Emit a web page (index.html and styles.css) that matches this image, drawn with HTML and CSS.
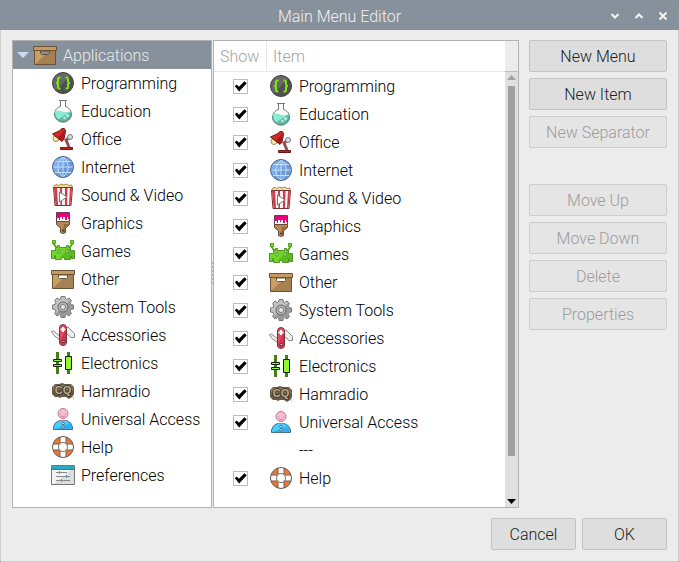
FILE: index.html
```html
<!DOCTYPE html>
<html lang="en">
<head>
<meta charset="utf-8">
<title>Main Menu Editor</title>
<link rel="stylesheet" href="styles.css">
</head>
<body>
<svg class="sprite" aria-hidden="true">
  <symbol id="box" viewBox="0 0 24 24">
    <path d="M1.500 7.500h21v14h-21z" fill="#ca9e67" stroke="#6b5235"/>
    <path d="M2 21 16 8h6v13z" fill="#a88152"/>
    <path d="M.5 3.500h23v4H.5z" fill="#c59a62" stroke="#6b5235"/>
    <path d="M7.500 8h9v2.500l-1 1h-7l-1-1z" fill="#fff" stroke="#6b5235"/>
  </symbol>
  <symbol id="box-selected" viewBox="0 0 24 24">
    <path d="M1.500 7.500h21v14h-21z" fill="#ca9e67" stroke="#6b5235"/>
    <path d="M2 21 16 8h6v13z" fill="#a88152"/>
    <path d="M.5 3.500h23v4H.5z" fill="#c59a62" stroke="#6b5235"/>
    <path d="M7.500 8h9v2.500l-1 1h-7l-1-1z" fill="#87919b" stroke="#6b5235"/>
  </symbol>
  <symbol id="programming" viewBox="0 0 24 24">
    <circle cx="12" cy="12" r="10.500" fill="#686868" stroke="#3c3c3c"/>
    <path d="M19.200 4.800A10 10 0 0 1 4.800 19.200z" fill="#505050"/>
    <path d="M9.500 6.500H8.300Q7 6.500 7 8v2.500Q7 12 5 12q2 0 2 1.500V16q0 1.500 1.300 1.500h1.200M14.500 6.500h1.200Q17 6.500 17 8v2.500q0 1.500 2 1.500-2 0-2 1.500V16q0 1.500-1.300 1.500h-1.200" fill="none" stroke="#7fe512" stroke-width="2"/>
  </symbol>
  <symbol id="education" viewBox="0 0 24 24">
    <path d="M9.500 2v5.500a8.500 8 0 1 0 5 0V2" fill="#fafafa" stroke="#777"/>
    <path d="M8 1.500h8" stroke="#777"/>
    <path d="M3.500 12q4-1 8 .5t9-.5v3.500A8.500 7 0 0 1 12 22.500 8.500 7 0 0 1 3.500 15.500z" fill="#8ce9d2"/>
    <path d="M20 12q2 7-4 9.500-5 1.500-9-1z" fill="#64bda9"/>
    <path d="M3.500 14a8.500 8.500 0 1 0 17 0" fill="none" stroke="#4d8c80"/>
    <circle cx="16.500" cy="16.500" r="1.500" fill="#b9eee2"/><circle cx="13.500" cy="19" r="1.200" fill="#b9eee2"/>
  </symbol>
  <symbol id="office" viewBox="0 0 24 24">
    <circle cx="5" cy="11.500" r="3" fill="#f8eda0" stroke="#999165"/>
    <path d="M18.500 10.500 15 13l3 7" fill="none" stroke="#666" stroke-width="3"/>
    <path d="M18.500 10.500 15 13l3 7" fill="none" stroke="#c33"/>
    <path d="M1.500 7 9 3.500Q10 1 13 1.500q2 1 1.500 3L13 12l-2 2.500z" fill="#d82929" stroke="#6b1a1a"/>
    <path d="m6.500 11 7.500-8-1.500 9-1.500 2z" fill="#a91c1c"/>
    <circle cx="19" cy="10" r="2.500" fill="#ddd" stroke="#777"/>
    <path d="M9.500 20.500h12v2h-12z" fill="#c92020" stroke="#6b1a1a"/>
  </symbol>
  <symbol id="internet" viewBox="0 0 24 24">
    <circle cx="12" cy="12" r="10.500" fill="#7badec"/>
    <path d="M19.400 4.600A10.500 10.500 0 0 1 4.600 19.400z" fill="#6b99d8"/>
    <path d="M12 1.500v21M1.500 12h21M3.500 6.500h17M3.500 17.500h17M12 1.500Q1 12 12 22.500M12 1.500Q23 12 12 22.500" fill="none" stroke="#c7dcf5"/>
    <circle cx="12" cy="12" r="10.500" fill="none" stroke="#4b6489"/>
  </symbol>
  <symbol id="video" viewBox="0 0 24 24">
    <path d="M3 5V3l2-1.500 3 1 2-1.500 3 1 3-1 2 1.500 3-.5v3z" fill="#f7df9b" stroke="#a68c54"/>
    <path d="M2.500 4.500h19l-1.500 18H4z" fill="#f2f2f2" stroke="#7a3338"/>
    <path d="M3 5h3l1 17H4.500zM9 5h2v17H9.500zM14 5h2.500l-.5 17h-2zM19 5h2l-1.500 17H18z" fill="#d23c4a"/>
    <path d="m8.500 9 7.500 5-7.500 5z" fill="#fff" stroke="#777"/>
  </symbol>
  <symbol id="graphics" viewBox="0 0 24 24">
    <path d="M5.500 1.500h13v9h-13z" fill="#fff" stroke="#733754"/>
    <path d="M6 2h12v6h-1V6h-1v3h-2V6h-2v2h-1V6H9v3H8V7H6z" fill="#e6007e"/>
    <path d="M5.500 10.500h13v3l-4 3.500v4.500l-2 1h-1l-2-1V17l-4-3.500z" fill="#b58a57" stroke="#654b31"/>
    <path d="M13 13h5l-4 3.500V21l-2 1z" fill="#91693f"/><circle cx="12" cy="19.500" r="1" fill="#4d3925"/>
  </symbol>
  <symbol id="games" viewBox="0 0 24 24">
    <path d="M2 4 5 8v2M22 4l-3 4v2" fill="none" stroke="#55a91a" stroke-width="2"/>
    <path d="M1.500 1.500h3v3h-3zM19.500 1.500h3v3h-3z" fill="#71dc1b" stroke="#55a020"/>
    <path d="M6.500 6.500h2v2h7v-2h2v2h2v3h4v8h-3v-3h-1v4h-6v-2h-3v2h-6v-4h-1v3h-3v-8h4v-3h2z" fill="#6fd824" stroke="#55922b"/>
    <path d="M8 19 19 9v3h4v7h-2v-3h-2v4h-5v-2h-4z" fill="#5dbc1d"/>
    <path d="M7 11h2v3H7zM15 11h2v3h-2z" fill="#fff" stroke="#5c8c39"/>
  </symbol>
  <symbol id="gear" viewBox="0 0 24 24">
    <path d="m9.500 4 .5-2.500h4l.5 2.500 1 .5L18 3l2.500 2.500L19 8l.8 1.500 2.700.5v4l-2.700.5L19 16l1.500 2.500L18 21l-2.500-1.500-1 .5-.5 2.500h-4L9.500 20l-1-.5L6 21l-2.500-2.500L5 16l-.8-1.500-2.700-.5v-4l2.700-.5L5 8 3.500 5.500 6 3l2.500 1.500z" fill="#c2c2c2" stroke="#777"/>
    <path d="m19.500 4.500 1 1L19 8l.8 1.500 2.200.5v4l-2.200.5L19 16l1.500 2.500L18 20.500 15.500 19l-1.500 3h-4l-.5-2.500-1-.5L6 20.500 4.500 19z" fill="#999"/>
    <circle cx="12" cy="12" r="5" fill="#b7b7b7" stroke="#666"/><circle cx="12" cy="12" r="2.500" fill="#eee" stroke="#777"/>
  </symbol>
  <symbol id="knife" viewBox="0 0 24 24">
    <path d="m9 17-6-4.500-2.500-4 2-.5L10 14zM15 10l5 4.500h3.500v-4L17 4l-2 1z" fill="#eee" stroke="#888"/>
    <rect x="8.500" y="1.500" width="7" height="21" rx="3.500" fill="#e94b61" stroke="#76323b"/>
    <path d="M15 5v14a3 3 0 0 1-6 0z" fill="#cc374d"/>
    <path d="M12 4v5M9.500 6.500h5" stroke="#fff" stroke-width="2"/>
    <path d="M11 17.500h3v2h-3z" fill="#bbb" stroke="#773640"/>
  </symbol>
  <symbol id="electronics" viewBox="0 0 24 24">
    <path d="M6.500 1v22M17.500 1v22" stroke="#477d12" stroke-width="3"/>
    <path d="M2.500 8.500h8v2h-8zM2.500 13.500h8v2h-8zM14.500 5.500h6v13h-6z" fill="#91fa2c" stroke="#10230a"/>
  </symbol>
  <symbol id="radio" viewBox="0 0 24 24">
    <path d="M4 17h16l3 4v-8z" fill="#ddd"/>
    <path d="M4 5h4l3-1 3 1h6l3 3v7l-2 3-3 2-3-2h-4l-2 1-2-1H4l-3-3V8z" fill="#675b48"/>
    <path d="M4 6h16l2 3v2H2V8z" fill="#8e8168"/>
    <text class="radio-call" x="12" y="15" text-anchor="middle" fill="#b8ab92" stroke="#443b2c" stroke-width="2" paint-order="stroke">CQ</text>
  </symbol>
  <symbol id="person" viewBox="0 0 24 24">
    <circle cx="12" cy="6.500" r="5" fill="#ffb9d2" stroke="#a88392"/>
    <path d="M9 7h1M14 7h1M10 9q2 1.500 4 0" fill="none" stroke="#cf86a2"/>
    <path d="M2.500 22.500V20q1-5 6-6.500h7q5 1.500 6 6.500v2.500z" fill="#44d0ff" stroke="#477386"/>
    <path d="m4 22 15-6 2 4v2z" fill="#35adf3"/>
    <path d="M9 13.500h6" stroke="#bd7891"/>
    <circle cx="12" cy="16.500" r="1.300" fill="#d9f2f7" stroke="#477386"/><circle cx="12" cy="20" r="1.300" fill="#d9f2f7" stroke="#477386"/>
  </symbol>
  <symbol id="help" viewBox="0 0 24 24">
    <circle cx="12" cy="12" r="7.500" fill="none" stroke="#e27a3c" stroke-width="6"/>
    <path d="M9 1.500h6v6H9zM9 16.500h6v6H9zM1.500 9h6v6h-6zM16.500 9h6v6h-6z" fill="#fff"/>
    <path d="M9 2v6M15 2v6M9 16v6M15 16v6M2 9h6M2 15h6M16 9h6M16 15h6" stroke="#805c4c"/>
    <circle cx="12" cy="12" r="10.500" fill="none" stroke="#655c58"/><circle cx="12" cy="12" r="4.500" fill="#fff" stroke="#777"/>
  </symbol>
  <symbol id="preferences" viewBox="0 0 24 24">
    <path d="M.5 2.500h23v19H.5z" fill="#f4f4f4" stroke="#777"/>
    <path d="M3 21 21 6h2v15z" fill="#ddd"/><path d="M1 3h22v3H1z" fill="#2caac4"/>
    <path d="M.5 6.500h23" stroke="#397d8b"/>
    <path d="M5 9.500h11M5 13.500h14M5 17.500h14" stroke="#888"/>
    <path d="M8.500 8v3M15.500 12v3M10.500 16v3" stroke="#22b2d0"/>
  </symbol>
</svg>
<div class="window">
  <header class="titlebar">
    <h1>Main Menu Editor</h1>
    <div class="window-controls">
      <button type="button" aria-label="Minimize"><svg viewBox="0 0 10 10"><path d="m1.500 3 3.500 3.500L8.500 3"/></svg></button>
      <button type="button" aria-label="Maximize"><svg viewBox="0 0 10 10"><path d="M1.500 7 5 3.500 8.500 7"/></svg></button>
      <button type="button" aria-label="Close"><svg viewBox="0 0 10 10"><path d="m1.500 1.500 7 7m0-7-7 7"/></svg></button>
    </div>
  </header>
  <main class="content">
    <div class="workspace">
      <nav class="panel tree" aria-label="Applications">
        <div class="tree-root"><span class="expander"></span><svg class="icon"><use href="#box-selected"/></svg><span class="name">Applications</span></div>
        <ul>
          <li><svg class="icon"><use href="#programming"/></svg><span class="name">Programming</span></li>
          <li><svg class="icon"><use href="#education"/></svg><span class="name">Education</span></li>
          <li><svg class="icon"><use href="#office"/></svg><span class="name">Office</span></li>
          <li><svg class="icon"><use href="#internet"/></svg><span class="name">Internet</span></li>
          <li><svg class="icon"><use href="#video"/></svg><span class="name">Sound &amp; Video</span></li>
          <li><svg class="icon"><use href="#graphics"/></svg><span class="name">Graphics</span></li>
          <li><svg class="icon"><use href="#games"/></svg><span class="name">Games</span></li>
          <li><svg class="icon"><use href="#box"/></svg><span class="name">Other</span></li>
          <li><svg class="icon"><use href="#gear"/></svg><span class="name">System Tools</span></li>
          <li><svg class="icon"><use href="#knife"/></svg><span class="name">Accessories</span></li>
          <li><svg class="icon"><use href="#electronics"/></svg><span class="name">Electronics</span></li>
          <li><svg class="icon"><use href="#radio"/></svg><span class="name">Hamradio</span></li>
          <li><svg class="icon"><use href="#person"/></svg><span class="name">Universal Access</span></li>
          <li><svg class="icon"><use href="#help"/></svg><span class="name">Help</span></li>
          <li><svg class="icon"><use href="#preferences"/></svg><span class="name">Preferences</span></li>
        </ul>
      </nav>
      <div class="splitter"></div>
      <section class="panel items">
        <table>
          <thead><tr><th class="show">Show</th><th>Item</th></tr></thead>
          <tbody>
            <tr><td><input type="checkbox" id="i1" checked></td><td><label for="i1"><svg class="icon"><use href="#programming"/></svg><span class="name">Programming</span></label></td></tr>
            <tr><td><input type="checkbox" id="i2" checked></td><td><label for="i2"><svg class="icon"><use href="#education"/></svg><span class="name">Education</span></label></td></tr>
            <tr><td><input type="checkbox" id="i3" checked></td><td><label for="i3"><svg class="icon"><use href="#office"/></svg><span class="name">Office</span></label></td></tr>
            <tr><td><input type="checkbox" id="i4" checked></td><td><label for="i4"><svg class="icon"><use href="#internet"/></svg><span class="name">Internet</span></label></td></tr>
            <tr><td><input type="checkbox" id="i5" checked></td><td><label for="i5"><svg class="icon"><use href="#video"/></svg><span class="name">Sound &amp; Video</span></label></td></tr>
            <tr><td><input type="checkbox" id="i6" checked></td><td><label for="i6"><svg class="icon"><use href="#graphics"/></svg><span class="name">Graphics</span></label></td></tr>
            <tr><td><input type="checkbox" id="i7" checked></td><td><label for="i7"><svg class="icon"><use href="#games"/></svg><span class="name">Games</span></label></td></tr>
            <tr><td><input type="checkbox" id="i8" checked></td><td><label for="i8"><svg class="icon"><use href="#box"/></svg><span class="name">Other</span></label></td></tr>
            <tr><td><input type="checkbox" id="i9" checked></td><td><label for="i9"><svg class="icon"><use href="#gear"/></svg><span class="name">System Tools</span></label></td></tr>
            <tr><td><input type="checkbox" id="i10" checked></td><td><label for="i10"><svg class="icon"><use href="#knife"/></svg><span class="name">Accessories</span></label></td></tr>
            <tr><td><input type="checkbox" id="i11" checked></td><td><label for="i11"><svg class="icon"><use href="#electronics"/></svg><span class="name">Electronics</span></label></td></tr>
            <tr><td><input type="checkbox" id="i12" checked></td><td><label for="i12"><svg class="icon"><use href="#radio"/></svg><span class="name">Hamradio</span></label></td></tr>
            <tr><td><input type="checkbox" id="i13" checked></td><td><label for="i13"><svg class="icon"><use href="#person"/></svg><span class="name">Universal Access</span></label></td></tr>
            <tr><td></td><td class="separator">---</td></tr>
            <tr><td><input type="checkbox" id="i14" checked></td><td><label for="i14"><svg class="icon"><use href="#help"/></svg><span class="name">Help</span></label></td></tr>
          </tbody>
        </table>
        <div class="scrollbar" aria-hidden="true">
          <div class="corner"></div>
          <div class="arrow up"></div>
          <div class="track"><div class="thumb"></div></div>
          <div class="arrow down"></div>
        </div>
      </section>
      <div class="actions">
        <button type="button">New Menu</button>
        <button type="button">New Item</button>
        <button type="button" disabled>New Separator</button>
        <button type="button" class="group-start" disabled>Move Up</button>
        <button type="button" disabled>Move Down</button>
        <button type="button" disabled>Delete</button>
        <button type="button" disabled>Properties</button>
      </div>
    </div>
    <footer class="dialog-buttons">
      <button type="button">Cancel</button>
      <button type="button">OK</button>
    </footer>
  </main>
</div>
</body>
</html>
```
FILE: styles.css
```css
* { box-sizing: border-box; }
html { background: #0a1f14; }
body {
  margin: 0;
  font: 300 16px/20px Roboto, "Liberation Sans", sans-serif;
  color: #000;
}
.sprite { display: none; }
.radio-call { font: 700 11px "Liberation Sans", sans-serif; }
.window {
  display: flex;
  flex-direction: column;
  min-height: 100vh;
  background: #ececec;
  border-radius: 2px;
  overflow: hidden;
}
.titlebar {
  display: grid;
  grid-template-columns: 1fr auto 1fr;
  align-items: center;
  height: 30px;
  padding: 2px 10px 0;
  background: #87919b;
  color: #f0f0f0;
}
.titlebar h1 { grid-column: 2; margin: 0; padding-top: 2px; font: inherit; }
.window-controls { display: flex; justify-content: flex-end; gap: 12px; }
.window-controls button {
  display: flex;
  width: 12px;
  height: 12px;
  padding: 1px;
  border: 0;
  background: none;
}
.window-controls svg { width: 10px; height: 10px; fill: none; stroke: #f4f4f4; stroke-width: 2; }
.content {
  flex: 1;
  display: flex;
  flex-direction: column;
  gap: 10px;
  padding: 10px 11px 11px;
  border: 1px solid #cdcdcd;
  border-top: 0;
}
.workspace { flex: 1; display: flex; }
.panel { border: 1px solid #b4b2b0; background: #fff; }
.tree { width: 200px; }
.tree-root, .tree li, .items label { display: flex; align-items: center; gap: 6px; height: 28px; }
.tree-root { padding-left: 4px; background: #87919b; color: #e6e9eb; }
.tree ul { margin: 0; padding: 0 0 0 38px; list-style: none; }
.name { padding-top: 2px; }
.expander { width: 12px; height: 6px; margin-right: -2px; background: #c9ddf2; clip-path: polygon(0 0, 100% 0, 50% 100%); }
.icon { flex: none; width: 24px; height: 24px; }
.splitter {
  width: 1px;
  background: repeating-linear-gradient(#b4b2b0 0 2px, #ececec 2px 4px) center / 1px 24px no-repeat;
}
.items { flex: 1; display: flex; align-items: stretch; }
table { flex: 1; align-self: flex-start; border-collapse: separate; border-spacing: 0; }
th {
  height: 31px;
  padding: 2px 6px 0;
  border-bottom: 1px solid #e8e8e8;
  font-weight: 300;
  text-align: left;
  color: #a3a3a3;
}
.show { width: 53px; border-right: 1px solid #e8e8e8; }
td { height: 28px; padding: 0 0 0 2px; }
td:first-child { padding: 0; text-align: center; }
.items .separator { padding: 2px 0 0 32px; }
input {
  display: block;
  appearance: none;
  width: 15px;
  height: 15px;
  margin: 0 auto;
  border: 1px solid #bcbcbc;
  background: #fff;
}
input:checked::before {
  content: "";
  display: block;
  width: 13px;
  height: 13px;
  background: #000;
  clip-path: polygon(6% 52%, 22% 38%, 38% 56%, 80% 13%, 98% 28%, 40% 92%);
}
.scrollbar { display: flex; flex-direction: column; align-items: center; width: 13px; background: #e0e0e0; }
.corner { width: 100%; height: 31px; background: #ececec; border-bottom: 1px solid #bdbdbd; }
.arrow { width: 9px; height: 5px; background: #a0a0a0; }
.up { margin: 3px 0 6px; clip-path: polygon(50% 0, 100% 100%, 0 100%); }
.down { margin: 6px 0 3px; background: #000; clip-path: polygon(0 0, 100% 0, 50% 100%); }
.track { flex: 1; width: 7px; }
.thumb { height: 91%; background: #a0a0a0; }
.actions { display: flex; flex-direction: column; gap: 6px; width: 138px; margin-left: 10px; }
.actions button, .dialog-buttons button {
  height: 32px;
  padding: 2px 8px 0;
  border: 1px solid #c4c4c4;
  border-radius: 2px;
  background: #dedede;
  font: inherit;
  color: #222;
}
.actions button:disabled { background: #e5e5e5; border-color: #cdcdcd; color: #9c9c9c; }
.actions .group-start { margin-top: 30px; }
.dialog-buttons { display: flex; justify-content: flex-end; gap: 6px; }
.dialog-buttons button { width: 85px; }
```
